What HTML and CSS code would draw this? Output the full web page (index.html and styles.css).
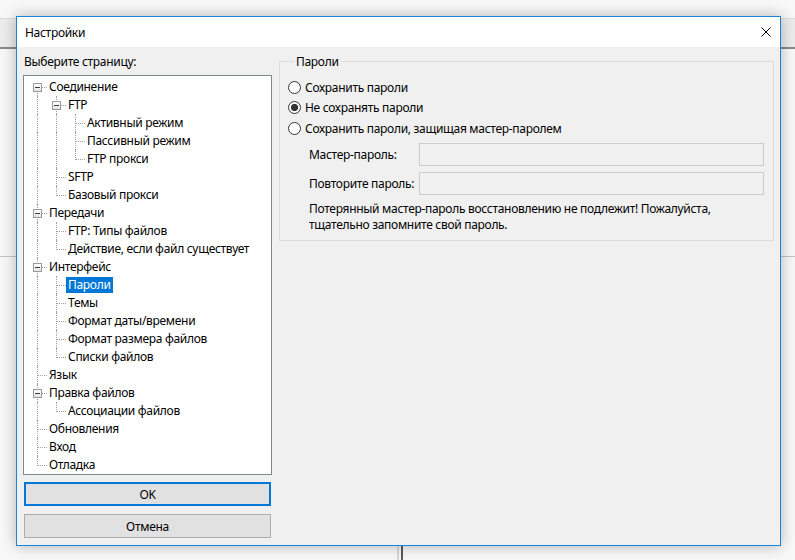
FILE: index.html
```html
<!DOCTYPE html>
<html lang="ru">
<head>
    <meta charset="UTF-8">
    <title>Настройки</title>
    <link rel="stylesheet" href="styles.css">
</head>
<body>
    <div class="window">
        <div class="titlebar">
            <span class="title">Настройки</span>
            <button class="close" aria-label="Закрыть">
                <svg width="10" height="10" viewBox="0 0 10 10"><path d="M0.5 0.5 L9.5 9.5 M9.5 0.5 L0.5 9.5" stroke="#000" stroke-width="1" fill="none"/></svg>
            </button>
        </div>

        <div class="dialog-body">
            <div class="left-col">
                <div class="caption">Выберите страницу:</div>
                <div class="tree">
                    <div class="node"><span class="g f"><i class="exp"></i></span><span class="label">Соединение</span></div>
                    <div class="node"><span class="g v"></span><span class="g t"><i class="exp"></i></span><span class="label">FTP</span></div>
                    <div class="node"><span class="g v"></span><span class="g v"></span><span class="g t"></span><span class="label">Активный режим</span></div>
                    <div class="node"><span class="g v"></span><span class="g v"></span><span class="g t"></span><span class="label">Пассивный режим</span></div>
                    <div class="node"><span class="g v"></span><span class="g v"></span><span class="g l"></span><span class="label">FTP прокси</span></div>
                    <div class="node"><span class="g v"></span><span class="g t"></span><span class="label">SFTP</span></div>
                    <div class="node"><span class="g v"></span><span class="g l"></span><span class="label">Базовый прокси</span></div>
                    <div class="node"><span class="g t"><i class="exp"></i></span><span class="label">Передачи</span></div>
                    <div class="node"><span class="g v"></span><span class="g t"></span><span class="label">FTP: Типы файлов</span></div>
                    <div class="node"><span class="g v"></span><span class="g l"></span><span class="label">Действие, если файл существует</span></div>
                    <div class="node"><span class="g t"><i class="exp"></i></span><span class="label">Интерфейс</span></div>
                    <div class="node"><span class="g v"></span><span class="g t"></span><span class="label selected">Пароли</span></div>
                    <div class="node"><span class="g v"></span><span class="g t"></span><span class="label">Темы</span></div>
                    <div class="node"><span class="g v"></span><span class="g t"></span><span class="label">Формат даты/времени</span></div>
                    <div class="node"><span class="g v"></span><span class="g t"></span><span class="label">Формат размера файлов</span></div>
                    <div class="node"><span class="g v"></span><span class="g l"></span><span class="label">Списки файлов</span></div>
                    <div class="node"><span class="g t"></span><span class="label">Язык</span></div>
                    <div class="node"><span class="g t"><i class="exp"></i></span><span class="label">Правка файлов</span></div>
                    <div class="node"><span class="g v"></span><span class="g l"></span><span class="label">Ассоциации файлов</span></div>
                    <div class="node"><span class="g t"></span><span class="label">Обновления</span></div>
                    <div class="node"><span class="g t"></span><span class="label">Вход</span></div>
                    <div class="node"><span class="g l"></span><span class="label">Отладка</span></div>
                </div>
                <button class="btn btn-default">OK</button>
                <button class="btn">Отмена</button>
            </div>

            <fieldset class="group">
                <legend>Пароли</legend>
                <div class="radio-row"><span class="radio"></span>Сохранить пароли</div>
                <div class="radio-row"><span class="radio checked"></span>Не сохранять пароли</div>
                <div class="radio-row"><span class="radio"></span>Сохранить пароли, защищая мастер-паролем</div>
                <div class="field-row">
                    <span class="field-label">Мастер-пароль:</span>
                    <span class="input"></span>
                </div>
                <div class="field-row">
                    <span class="field-label">Повторите пароль:</span>
                    <span class="input"></span>
                </div>
                <p class="note">Потерянный мастер-пароль восстановлению не подлежит! Пожалуйста,<br>тщательно запомните свой пароль.</p>
            </fieldset>
        </div>
    </div>
</body>
</html>
```

FILE: styles.css
```css
* {
    margin: 0;
    padding: 0;
    box-sizing: border-box;
}

body {
    width: 795px;
    height: 560px;
    overflow: hidden;
    padding: 16px 0 0 16px;
    font-family: "Noto Sans", "Open Sans", sans-serif;
    font-size: 12px;
    letter-spacing: -0.3px;
    color: #000;
    background:
        linear-gradient(#dadada, #dadada) 0 18px / 100% 1px no-repeat,
        linear-gradient(#ececec, #ececec) 0 19px / 100% 28px no-repeat,
        linear-gradient(#8a8a8a, #8a8a8a) 0 47px / 100% 2px no-repeat,
        linear-gradient(#c4c4c4, #c4c4c4) 0 256px / 100% 1px no-repeat,
        linear-gradient(#d8d8d8, #d8d8d8) 397px 540px / 2px 20px no-repeat,
        linear-gradient(#5a5a5a, #5a5a5a) 401px 540px / 2px 20px no-repeat,
        #f8f8f8;
}

/* dialog window */
.window {
    width: 765px;
    height: 530px;
    border: 1px solid #1883d7;
    background: #f0f0f0;
    box-shadow: 0 0 14px rgba(0, 0, 0, 0.28);
    display: flex;
    flex-direction: column;
}

.titlebar {
    height: 30px;
    background: #fff;
    display: flex;
    align-items: center;
    justify-content: space-between;
    padding: 0 9px 0 8px;
}

.close {
    border: none;
    background: none;
    width: 10px;
    height: 10px;
    display: flex;
}

.dialog-body {
    flex: 1;
    display: flex;
    gap: 7px;
    padding: 7px 6px;
}

/* page tree */
.left-col {
    width: 249px;
    display: flex;
    flex-direction: column;
}

.caption {
    line-height: 16px;
    height: 16px;
    margin: 0 0 5px 1px;
}

.tree {
    height: 400px;
    border: 1px solid #828790;
    background: #fff;
    padding: 2px 0 0 4px;
}

.node {
    display: flex;
    height: 18px;
    align-items: center;
}

.g {
    position: relative;
    width: 19px;
    height: 18px;
    flex-shrink: 0;
}

.g::before,
.g::after {
    content: '';
    position: absolute;
}

/* vertical guide */
.g.v::before,
.g.t::before {
    left: 9px;
    top: 0;
    height: 18px;
    border-left: 1px dotted #a0a0a0;
}

.g.l::before {
    left: 9px;
    top: 0;
    height: 10px;
    border-left: 1px dotted #a0a0a0;
}

.g.f::before {
    left: 9px;
    top: 9px;
    height: 9px;
    border-left: 1px dotted #a0a0a0;
}

/* horizontal guide */
.g.t::after,
.g.l::after,
.g.f::after {
    left: 10px;
    top: 9px;
    width: 9px;
    border-top: 1px dotted #a0a0a0;
}

.exp {
    position: absolute;
    left: 5px;
    top: 5px;
    width: 9px;
    height: 9px;
    border: 1px solid #9a9a9a;
    background: linear-gradient(#fff, #e4e4e4);
    z-index: 1;
}

.exp::after {
    content: '';
    position: absolute;
    left: 1px;
    top: 3px;
    width: 5px;
    height: 1px;
    background: #3c3c3c;
}

.label {
    padding: 0 2px;
    line-height: 16px;
    white-space: nowrap;
}

.label.selected {
    background: #0078d7;
    color: #fff;
}

/* buttons */
.btn {
    height: 24px;
    margin: 0 1px;
    font: inherit;
    letter-spacing: inherit;
    color: #000;
    background: #e1e1e1;
    border: 1px solid #adadad;
}

.btn-default {
    margin-top: 7px;
    border: 2px solid #0078d7;
}

.btn-default + .btn {
    margin-top: 8px;
}

/* password group */
.group {
    flex: 1;
    align-self: flex-start;
    border: 1px solid #dcdcdc;
    padding: 8px 9px 7px 8px;
}

.group legend {
    margin-left: 6px;
    padding: 0 2px;
    line-height: 15px;
}

.radio-row {
    height: 20px;
    display: flex;
    align-items: center;
    gap: 4px;
}

.radio-row:nth-of-type(3) {
    margin-top: 1px;
}

.radio {
    width: 13px;
    height: 13px;
    border: 1px solid #333;
    border-radius: 50%;
    background: #fff;
}

.radio.checked {
    background: radial-gradient(circle, #333 0 3.3px, #fff 3.9px);
}

.field-row {
    display: flex;
    align-items: center;
    margin: 5px 0 0 21px;
}

.field-row + .field-row {
    margin-top: 6px;
}

.field-label {
    width: 110px;
    white-space: nowrap;
}

.input {
    flex: 1;
    height: 23px;
    border: 1px solid #cccccc;
    background: #f0f0f0;
}

.note {
    margin: 6px 0 0 21px;
    line-height: 16px;
}
```
